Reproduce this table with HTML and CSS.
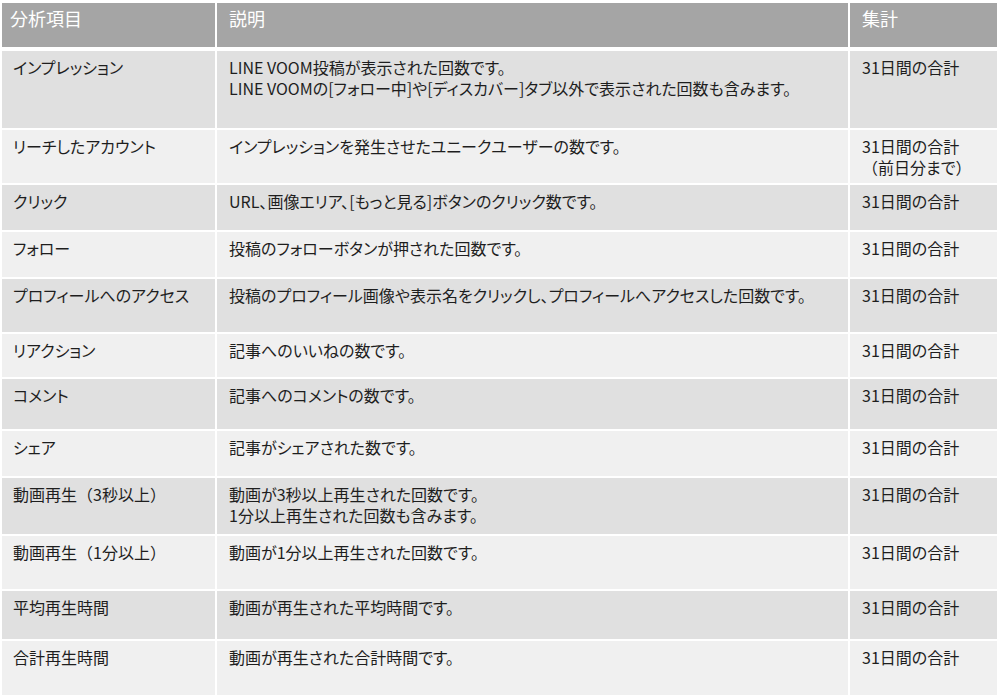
FILE: index.html
```html
<!DOCTYPE html>
<html lang="ja">
<head>
<meta charset="utf-8">
<title>分析項目</title>
<link rel="stylesheet" href="styles.css">
</head>
<body>
<div class="table">
  <div class="thead">
    <div class="th c1">分析項目</div>
    <div class="th c2">説明</div>
    <div class="th c3">集計</div>
  </div>
  <div class="tbody">
    <div class="row"><div class="td c1">インプレッション</div><div class="td c2"><p class="line">LINE VOOM投稿が表示された回数です。</p><p class="line">LINE VOOMの[フォロー中]や[ディスカバー]タブ以外で表示された回数も含みます。</p></div><div class="td c3">31日間の合計</div></div>
    <div class="row"><div class="td c1">リーチしたアカウント</div><div class="td c2">インプレッションを発生させたユニークユーザーの数です。</div><div class="td c3"><p class="line">31日間の合計</p><p class="line"><span class="fw">（</span>前日分まで<span class="fw">）</span></p></div></div>
    <div class="row"><div class="td c1">クリック</div><div class="td c2">URL、画像エリア、[もっと見る]ボタンのクリック数です。</div><div class="td c3">31日間の合計</div></div>
    <div class="row"><div class="td c1">フォロー</div><div class="td c2">投稿のフォローボタンが押された回数です。</div><div class="td c3">31日間の合計</div></div>
    <div class="row"><div class="td c1">プロフィールへのアクセス</div><div class="td c2">投稿のプロフィール画像や表示名をクリックし、プロフィールへアクセスした回数です。</div><div class="td c3">31日間の合計</div></div>
    <div class="row"><div class="td c1">リアクション</div><div class="td c2">記事へのいいねの数です。</div><div class="td c3">31日間の合計</div></div>
    <div class="row"><div class="td c1">コメント</div><div class="td c2">記事へのコメントの数です。</div><div class="td c3">31日間の合計</div></div>
    <div class="row"><div class="td c1">シェア</div><div class="td c2">記事がシェアされた数です。</div><div class="td c3">31日間の合計</div></div>
    <div class="row"><div class="td c1">動画再生<span class="fw">（</span>3秒以上<span class="fw">）</span></div><div class="td c2"><p class="line">動画が3秒以上再生された回数です。</p><p class="line">1分以上再生された回数も含みます。</p></div><div class="td c3">31日間の合計</div></div>
    <div class="row"><div class="td c1">動画再生<span class="fw">（</span>1分以上<span class="fw">）</span></div><div class="td c2">動画が1分以上再生された回数です。</div><div class="td c3">31日間の合計</div></div>
    <div class="row"><div class="td c1">平均再生時間</div><div class="td c2">動画が再生された平均時間です。</div><div class="td c3">31日間の合計</div></div>
    <div class="row"><div class="td c1">合計再生時間</div><div class="td c2">動画が再生された合計時間です。</div><div class="td c3">31日間の合計</div></div>
  </div>
</div>
</body>
</html>
```
FILE: styles.css
```css
html, body {
  margin: 0;
  padding: 0;
  background: #ffffff;
}

body {
  padding: 3px 0 0 2px;
  font-family: "Noto Sans CJK JP", "Noto Sans", sans-serif;
  font-feature-settings: "palt";
  color: #1e1e1e;
}

.table {
  width: 995px;
}

.thead,
.tbody {
  display: grid;
  grid-template-columns: 213px 631px 147px;
  column-gap: 2px;
}

.thead {
  height: 44px;
  margin-bottom: 4px;
}

.th {
  background: #a5a5a5;
  color: #ffffff;
  font-size: 18px;
  line-height: 22px;
  padding-top: 4px;
}

.th.c1 { padding-left: 8px; }
.th.c2 { padding-left: 12px; }
.th.c3 { padding-left: 12px; }

.tbody {
  grid-template-rows: 77px 53px 45px 45px 53px 43px 50px 45px 56px 53px 48px 54px;
  row-gap: 2px;
}

.row {
  display: contents;
}

.td {
  font-size: 16px;
  line-height: 21px;
  padding-top: 6px;
  background: #f0f0f0;
}

.row:nth-child(odd) > .td {
  background: #e0e0e0;
}

.line {
  margin: 0;
  height: 21px;
  overflow: visible;
}

.fw {
  font-feature-settings: normal;
}

.td.c1 { padding-left: 11px; }
.td.c2 { padding-left: 12px; }
.td.c3 { padding-left: 12px; }
```
